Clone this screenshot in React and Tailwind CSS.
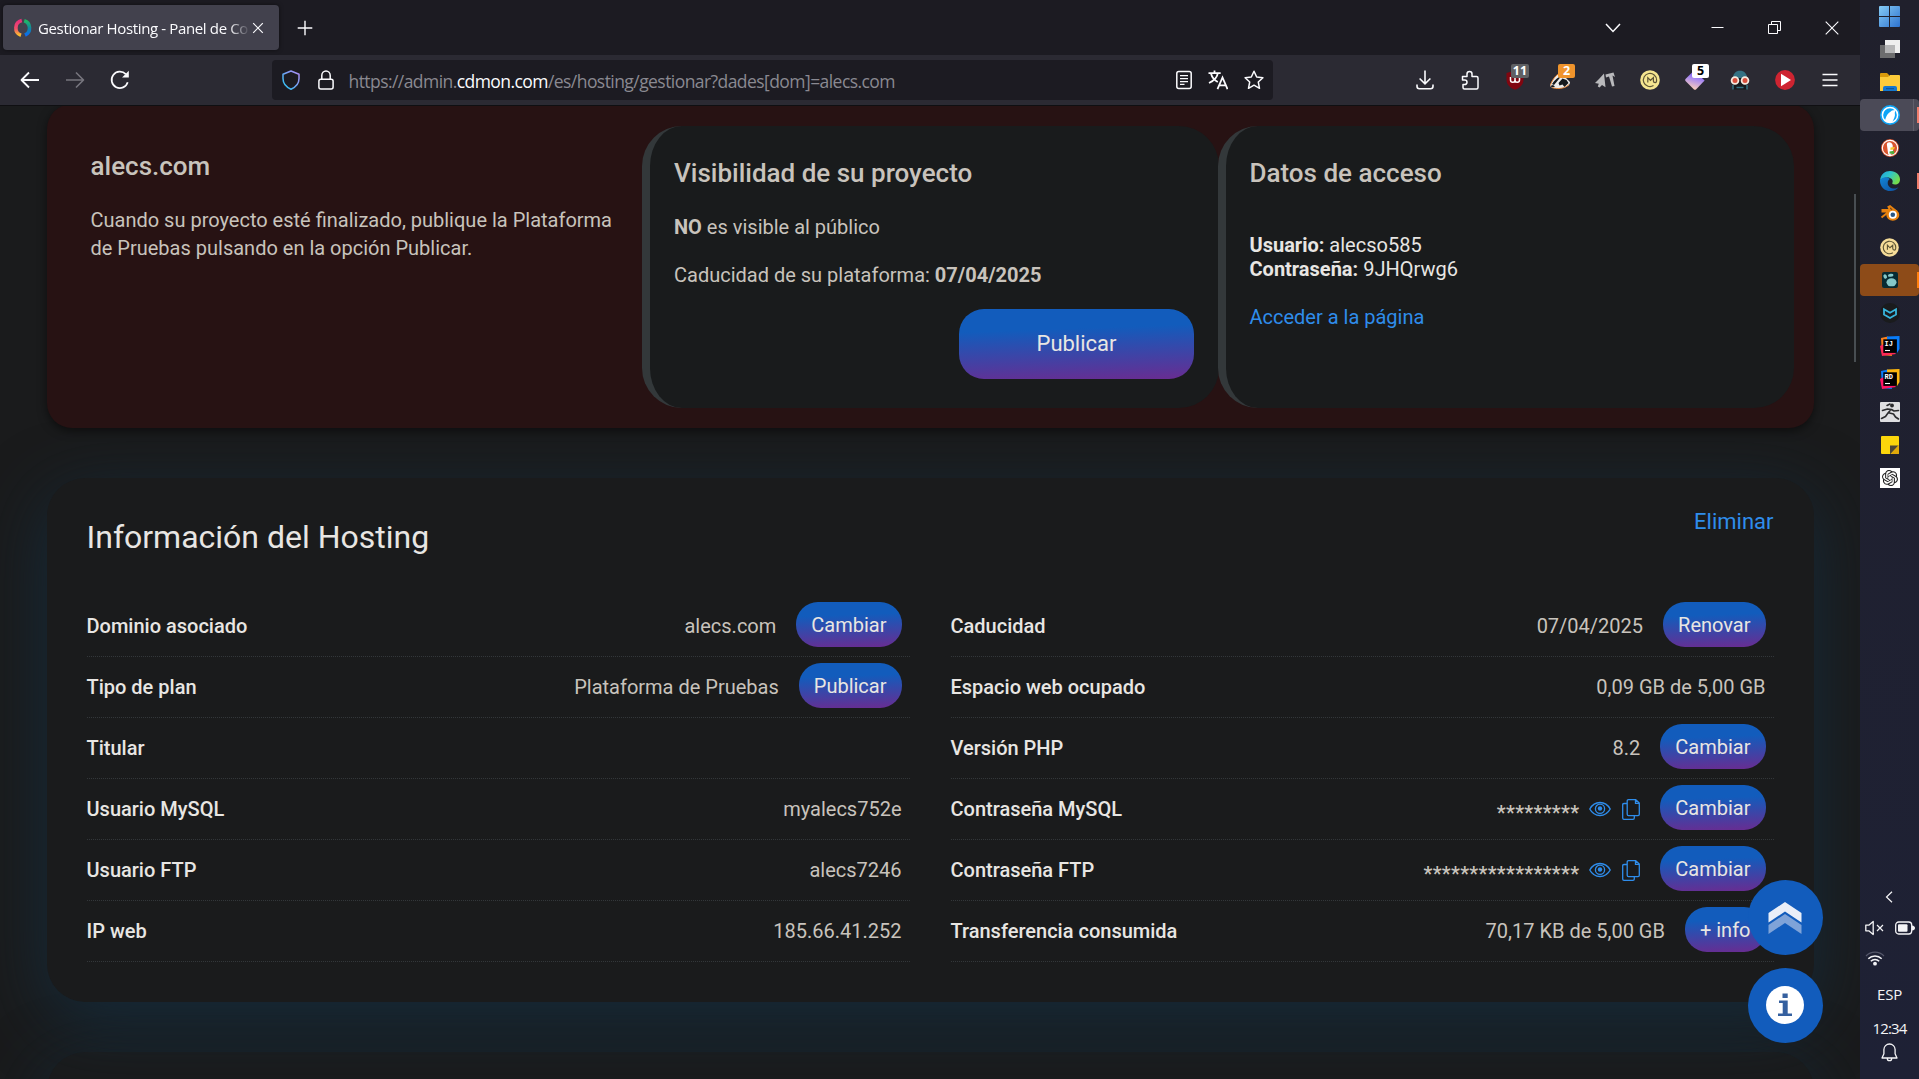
import React from "react";
import { SiOpenai } from "react-icons/si";

const Svg = ({ s = 20, w, h, vb = "0 0 20 20", children, className = "" }) => (
  <svg width={w || s} height={h || s} viewBox={vb} fill="none" className={`shrink-0 block ${className}`}>
    {children}
  </svg>
);

/* ---------- browser chrome ---------- */

function TabBar() {
  return (
    <div className="flex h-[55px] items-center bg-[#1c1b22] pl-[3px] text-[#fbfbfe]">
      <div className="flex h-[45px] w-[276px] items-center rounded-[4px] bg-[#42414d] pl-[10px] shadow-[0_0_4px_rgba(0,0,0,.5)]">
        <Svg s={20}>
          <defs>
            <linearGradient id="fa" x1="0" y1="0" x2="0" y2="1">
              <stop offset="0" stopColor="#e8307a" />
              <stop offset=".55" stopColor="#f0506a" />
              <stop offset="1" stopColor="#fbc02d" />
            </linearGradient>
            <linearGradient id="fb" x1="0" y1="0" x2="0" y2="1">
              <stop offset="0" stopColor="#1fb866" />
              <stop offset=".5" stopColor="#128a9a" />
              <stop offset="1" stopColor="#0b6cf0" />
            </linearGradient>
          </defs>
          <path d="M8.8 2.6A7.6 7.6 0 0 0 8 17.2" stroke="url(#fa)" strokeWidth="3.600" />
          <path d="M11.2 2.8A7.6 7.6 0 0 1 12 17" stroke="url(#fb)" strokeWidth="3.600" />
        </Svg>
        <div className="ml-[5px] w-[212px] whitespace-nowrap pt-[1px] text-[15px] tracking-[-0.360px] [mask-image:linear-gradient(to_right,#000_90%,transparent)]">
          Gestionar Hosting - Panel de Co
        </div>
        <Svg s={12} vb="0 0 12 12" className="ml-[2px]">
          <path d="M1.200 1.200l9.600 9.600M10.800 1.200l-9.600 9.600" stroke="#fbfbfe" strokeWidth="1.200" />
        </Svg>
      </div>
      <Svg s={16} vb="0 0 16 16" className="ml-[18px]">
        <path d="M8 .7v14.600M.7 8h14.600" stroke="#fbfbfe" strokeWidth="1.400" />
      </Svg>
      <div className="flex flex-1 items-center justify-end pr-[21px]">
        <Svg w={16} h={10} vb="0 0 16 10" className="mr-[90px]">
          <path d="M1 1l7 7.400L15 1" stroke="#fbfbfe" strokeWidth="1.500" />
        </Svg>
        <Svg w={13} h={12} vb="0 0 13 12" className="mr-[44px]">
          <path d="M.5 5.500h12" stroke="#fbfbfe" />
        </Svg>
        <Svg s={13} vb="0 0 13 13" className="mr-[44px]">
          <path d="M.5 3.500h9v9h-9zM3.500 3.500v-3h9v9h-3" stroke="#fbfbfe" />
        </Svg>
        <Svg s={14} vb="0 0 14 14">
          <path d="M.7.7l12.600 12.600M13.300.7L.7 13.300" stroke="#fbfbfe" strokeWidth="1.100" />
        </Svg>
      </div>
    </div>
  );
}

const Badge = ({ className, children }) => (
  <span className={`absolute flex h-[14px] items-center justify-center rounded-[2px] text-[12.500px] font-bold leading-none ${className}`}>
    {children}
  </span>
);

const Tool = ({ children }) => (
  <div className="relative flex h-[40px] w-[45px] items-center justify-center">{children}</div>
);

const Coin = ({ s = 20, fill = "#f5e690" }) => (
  <Svg s={s}>
    <circle cx="10" cy="10" r="9.800" fill={fill} />
    <path d="M13.500 15.600A6.600 6.600 0 1 1 16.600 10c0 2-.4 2.700-1.300 2.700S13.400 12 13.400 10.800V7.600L10.500 10.300 7.800 7.600v4.800" stroke="#5d5536" strokeWidth="1.200" />
  </Svg>
);

function NavBar() {
  return (
    <div className="flex h-[51px] items-center border-b border-[#0f0f12] bg-[#2b2a33]">
      <div className="flex w-[272px] items-center pl-[20px]">
        <Svg>
          <path d="M19 10H2M9 2.500L1.500 10 9 17.500" stroke="#fbfbfe" strokeWidth="1.800" strokeLinejoin="round" />
        </Svg>
        <Svg className="ml-[25px]">
          <path d="M1 10h17M11 2.500L18.500 10 11 17.500" stroke="#77767e" strokeWidth="1.600" strokeLinejoin="round" />
        </Svg>
        <Svg className="ml-[25px]">
          <path d="M17.700 12.200A8.200 8.200 0 1 1 15.800 4.200" stroke="#fbfbfe" strokeWidth="1.700" />
          <path d="M18.800 .8v6.700h-6.700z" fill="#fbfbfe" />
        </Svg>
      </div>
      <div className="flex h-[40px] w-[1001px] items-center rounded-[4px] bg-[#1c1b22] pl-[9px] pr-[9px]">
        <Svg>
          <defs>
            <linearGradient id="sh" x1="1" y1="0" x2="0" y2="1">
              <stop offset="0" stopColor="#b58cf5" />
              <stop offset=".5" stopColor="#6fa4f5" />
              <stop offset="1" stopColor="#1fc8f0" />
            </linearGradient>
          </defs>
          <path d="M10 1L18 4.200V8.500C18 13.500 15 17 10 19.200 5 17 2 13.500 2 8.500V4.200Z" stroke="url(#sh)" strokeWidth="1.500" strokeLinejoin="round" />
        </Svg>
        <Svg className="ml-[15px]">
          <path d="M5.800 9.500V5.500a4.200 4.500 0 0 1 8.400 0v4" stroke="#fbfbfe" strokeWidth="1.500" />
          <rect x="2.900" y="9.300" width="14.200" height="9.800" rx="2" stroke="#fbfbfe" strokeWidth="1.500" />
        </Svg>
        <div className="ml-[12.500px] flex-1 whitespace-nowrap pt-[2px] text-[17.500px] leading-[24px] tracking-[-0.560px] text-[#8a8991]">
          https://admin.<span className="text-[#fbfbfe]">cdmon.com</span>/es/hosting/gestionar?dades[dom]=alecs.com
        </div>
        <Svg className="mr-[14px]">
          <rect x="2.800" y="1.500" width="14.400" height="17" rx="2" stroke="#fbfbfe" strokeWidth="1.500" />
          <path d="M6 5.700h8M6 8.700h8M6 11.700h8M6 14.300h4.500" stroke="#fbfbfe" strokeWidth="1.300" />
        </Svg>
        <Svg className="mr-[16px]">
          <path d="M.5 3.200h12.200M6.500 .5v2.700M9.800 3.200C9.300 7 5.500 11 1 13M3 3.500C4 7.500 7 10.500 9.800 12M9.500 19.200L14.500 7.500l5 11.700M11.300 15.300h6.500" stroke="#fbfbfe" strokeWidth="1.800" />
        </Svg>
        <Svg>
          <path d="M10 1.300l2.700 5.700 6.200.8-4.600 4.200 1.200 6.300L10 15.200l-5.500 3.100 1.200-6.300L1.100 7.800 7.300 7z" stroke="#fbfbfe" strokeWidth="1.500" strokeLinejoin="round" />
        </Svg>
      </div>
      <div className="ml-[129px] flex items-center">
        <Tool>
          <Svg>
            <path d="M10 .5v13M4.600 8.500L10 13.800l5.400-5.300M2 14.500v1.800q0 2.400 2.400 2.400h11.200q2.400 0 2.400-2.400v-1.800" stroke="#fbfbfe" strokeWidth="1.600" />
          </Svg>
        </Tool>
        <Tool>
          <Svg>
            <path d="M2.500 6.500h4.500V4a2.500 2.500 0 0 1 5 0v2.500h4.500q1.500 0 1.500 1.500v9.500q0 1.500-1.500 1.500h-12q-1.500 0-1.500-1.500V14.500h1.800a2 2 0 0 0 0-4.400H2.500z" stroke="#fbfbfe" strokeWidth="1.500" strokeLinejoin="round" />
          </Svg>
        </Tool>
        <Tool>
          <Svg>
            <path d="M10 .5L18.500 3v6.500c0 5-3.500 8.500-8.500 10.300-5-1.800-8.500-5.300-8.500-10.300V3z" fill="#800610" />
            <path d="M5.500 7v3a2.200 2.200 0 0 0 4.500 0V7v3a2.200 2.200 0 0 0 4.500 0V7" stroke="#fff" strokeWidth="1.500" />
          </Svg>
          <Badge className="left-[19px] top-[4px] w-[18px] bg-[#5f6063] text-white">11</Badge>
        </Tool>
        <Tool>
          <Svg>
            <path d="M0 16C1 12 6 4 11 3l9 9c0 4-5 6-10 6C5 18.500 1 18 0 16z" fill="#ececec" />
            <path d="M2 14C4.500 10 8 7 11 6.500L6.500 12 4 15zM8.500 13l4-4.500 4 1.500 2 3-4 4-2-2.500-3 1zM0 16l3-1 2 1.500-2.500 1z" fill="#15181c" />
            <path d="M.5 15.500C1 12 6 3.500 11 3M2 17.500c4 1.500 12 2 17-3" stroke="#e98a3d" />
          </Svg>
          <Badge className="left-[21px] top-[4px] w-[17px] bg-[#f0942c] text-white">2</Badge>
        </Tool>
        <Tool>
          <Svg>
            <path d="M0 13L4 9l5-5.500 1.500 13.800-3.500-2.300-2.500 2.500-1.700-1 1-2.800zM10.500 4.500l8-2L20 7l-2.500-1.500 2 10.500-2.500.5L14 6.500 11 7.500z" fill="#b9b9bc" />
          </Svg>
        </Tool>
        <Tool><Coin /></Tool>
        <Tool>
          <Svg>
            <defs>
              <linearGradient id="dm" x1=".7" y1="0" x2=".4" y2="1">
                <stop offset="0" stopColor="#5b3cf5" />
                <stop offset=".45" stopColor="#a98af0" />
                <stop offset="1" stopColor="#ffd2b8" />
              </linearGradient>
            </defs>
            <path d="M9 .5L19.600 10.500 11 19.500q-1 .6-2 0L.5 11q-.6-1 0-2z" fill="url(#dm)" />
          </Svg>
          <Badge className="left-[20px] top-[4px] w-[17px] bg-white text-black">5</Badge>
        </Tool>
        <Tool>
          <Svg>
            <path d="M3 8C3 3.500 6 .8 10 .8S17 3.500 17 8z" fill="#347183" />
            <path d="M3 8h14v11.500H3z" fill="#16191d" />
            <path d="M3 15v4.500M17 15v4.500M6.500 17.500h7" stroke="#347183" strokeWidth="1.500" />
            <circle cx="5" cy="10.500" r="3.400" fill="#d94f3d" stroke="#f5eadf" strokeWidth="1.800" />
            <circle cx="15" cy="10.500" r="3.400" fill="#d94f3d" stroke="#f5eadf" strokeWidth="1.800" />
          </Svg>
        </Tool>
        <Tool>
          <Svg>
            <circle cx="10" cy="10" r="9.900" fill="#ce2431" />
            <path d="M6 3.800v12.400L16 10z" fill="#fff" />
          </Svg>
        </Tool>
        <Tool>
          <Svg s={16} vb="0 0 16 16">
            <path d="M.5 2.500h15M.5 8h15M.5 13.500h15" stroke="#fbfbfe" strokeWidth="1.500" />
          </Svg>
        </Tool>
      </div>
    </div>
  );
}

/* ---------- page ---------- */

const gradient = "bg-[linear-gradient(178deg,#125cbc_30%,#692c91_100%)]";

function Pill({ children }) {
  return (
    <button className={`ml-5 flex h-[45px] shrink-0 items-center rounded-[22px] px-[15px] text-[20px] text-[#e8e6e3] ${gradient}`}>
      {children}
    </button>
  );
}

const Eye = () => (
  <Svg w={22} h={16} vb="0 0 22 16" className="ml-[10px] mt-[3px]">
    <path d="M.8 8C3 4 7 1.500 11 1.500S19 4 21.200 8C19 12 15 14.500 11 14.500S3 12 .8 8z" stroke="#2f8deb" strokeWidth="1.400" />
    <circle cx="11" cy="7.700" r="4.600" stroke="#2f8deb" strokeWidth="1.300" />
    <circle cx="11" cy="7.500" r="2.200" fill="#2f8deb" />
  </Svg>
);

const Copy = () => (
  <Svg w={18} h={21} vb="0 0 18 21" className="ml-[11px] mt-[3px]">
    <path d="M5 4.500H2q-1.300 0-1.300 1.300V19q0 1.300 1.300 1.300h9q1.300 0 1.300-1.300v-2" stroke="#2f8deb" strokeWidth="1.300" />
    <path d="M6.500 .7h7.200L17.300 4v11.300q0 1.300-1.300 1.300H6.500q-1.300 0-1.300-1.300V2Q5.200.7 6.500.7zM13.500 1v3.300h3.500" stroke="#2f8deb" strokeWidth="1.300" />
  </Svg>
);

function Row({ label, value, action, secret }) {
  return (
    <div className="flex h-[61px] items-center border-b border-dotted border-[#33373a] pb-[3px] pr-[8px] text-[20px]">
      <span className="pt-[2px] font-medium text-[#e8e6e3]">{label}</span>
      <span className={secret ? "ml-auto pt-[11px] font-medium tracking-[0.300px] text-[#c8c3bc]" : "ml-auto pt-[2px] text-[#c8c3bc]"}>{value}</span>
      {secret && <Eye />}
      {secret && <Copy />}
      {action && <Pill>{action}</Pill>}
    </div>
  );
}

const left = [
  { label: "Dominio asociado", value: "alecs.com", action: "Cambiar" },
  { label: "Tipo de plan", value: "Plataforma de Pruebas", action: "Publicar" },
  { label: "Titular", value: "" },
  { label: "Usuario MySQL", value: "myalecs752e" },
  { label: "Usuario FTP", value: "alecs7246" },
  { label: "IP web", value: "185.66.41.252" },
];
const right = [
  { label: "Caducidad", value: "07/04/2025", action: "Renovar" },
  { label: "Espacio web ocupado", value: "0,09 GB de 5,00 GB" },
  { label: "Versión PHP", value: "8.2", action: "Cambiar" },
  { label: "Contraseña MySQL", value: "*********", action: "Cambiar", secret: true },
  { label: "Contraseña FTP", value: "*****************", action: "Cambiar", secret: true },
  { label: "Transferencia consumida", value: "70,17 KB de 5,00 GB", action: "+ info" },
];

function Page() {
  return (
    <div className="relative h-[973px] overflow-hidden bg-[#1a1b1c] px-[47px] font-[Roboto,sans-serif]">
      <section className="relative z-10 -mt-[2px] flex h-[324px] w-[1767px] rounded-[25px] bg-[#271213] pt-[22px] shadow-[0_3px_10px_rgba(0,0,0,.5)]">
        <div className="w-[595px] shrink-0 pl-[43.500px] pt-[22px] text-[#c8c3bc]">
          <h2 className="text-[26px] font-medium leading-[36px]">alecs.com</h2>
          <p className="mt-[22px] w-[530px] text-[20px] leading-[28px]">
            Cuando su proyecto esté finalizado, publique la Plataforma de Pruebas pulsando en la opción Publicar.
          </p>
        </div>
        <div className="h-[282px] w-[577px] shrink-0 rounded-[40px] border-l-[8px] border-[#33383a] bg-[#191b1c] pl-[24px] pr-[25px] text-[#c8c3bc]">
          <h2 className="mt-[29px] text-[26px] font-medium leading-[36px]">Visibilidad de su proyecto</h2>
          <p className="mt-[24px] text-[20px] leading-[24px]"><b>NO</b> es visible al público</p>
          <p className="mt-[24px] text-[20px] leading-[24px]">Caducidad de su plataforma: <b>07/04/2025</b></p>
          <div className="mt-[22px] flex justify-end">
            <button className={`h-[70px] w-[235px] rounded-[25px] pb-[2px] text-[22px] text-[#e8e6e3] ${gradient}`}>Publicar</button>
          </div>
        </div>
        <div className="-ml-[1px] h-[282px] w-[576px] shrink-0 rounded-[40px] border-l-[8px] border-[#33383a] bg-[#191b1c] pl-[23.500px] text-[20px] leading-[24px] text-[#e8e6e3]">
          <h2 className="mt-[29px] text-[26px] font-medium leading-[36px] text-[#c8c3bc]">Datos de acceso</h2>
          <p className="mt-[42px]"><b>Usuario:</b> alecso585</p>
          <p><b>Contraseña:</b> 9JHQrwg6</p>
          <p className="mt-[24px] text-[#2f8deb]">Acceder a la página</p>
        </div>
      </section>

      <section className="relative z-[1] mt-[50px] h-[524px] w-[1767px] rounded-[38px] bg-[#1a1b1c] pl-[39.500px] pr-[40.500px] pt-[36px] shadow-[0_18px_68px_rgba(20,48,66,.78)]">
        <div className="flex h-[82px] justify-between">
          <h1 className="pt-[2px] text-[32px] leading-[42px] text-[#e8e6e3]">Información del Hosting</h1>
          <span className="-mt-[6px] text-[22px] leading-[28px] text-[#2f8deb]">Eliminar</span>
        </div>
        <div className="grid grid-cols-[823px_823px] justify-between">
          <div>{left.map((r) => <Row key={r.label} {...r} />)}</div>
          <div>{right.map((r) => <Row key={r.label} {...r} />)}</div>
        </div>
      </section>

      <section className="mt-[50px] h-[400px] w-[1767px] rounded-[38px] bg-[#1a1b1c] shadow-[0_18px_68px_rgba(20,48,66,.78)]" />

      <div className="absolute left-[1854px] top-[88px] h-[168px] w-[2px] bg-[#484e51]" />
      <div className="absolute left-[1748px] top-[774px] z-20 flex flex-col gap-[13px]">
        <button className="flex h-[75px] w-[75px] items-center justify-center rounded-full bg-[#125cbc]">
          <Svg w={34} h={34} vb="0 0 34 34" className="-ml-[2px]">
            <path d="M.5 12L17 1l16.500 11v9.500L17 10.500.5 21.500z" fill="#e9eef8" />
            <path d="M.5 24L17 13 33.500 24v9L17 22 .5 33z" fill="#7fa3d8" />
          </Svg>
        </button>
        <button className="flex h-[75px] w-[75px] items-center justify-center rounded-full bg-[#125cbc]">
          <Svg s={38} vb="0 0 38 38" className="-ml-[2px] -mt-[1px]">
            <circle cx="19" cy="19" r="19" fill="#fff" />
            <path d="M16.500 7.500h5.200v4.500h-5.200zM13 14.500h8.700V27.500H26V30H12v-2.500h4.700V17H13z" fill="#35609f" />
          </Svg>
        </button>
      </div>
    </div>
  );
}

/* ---------- taskbar ---------- */

const Jet = ({ label, a, b, c }) => (
  <Svg>
    <path d="M1 2l7-1.500L12 20l-10-1z" fill={a} />
    <path d="M7 .5L19.500 0v13L17 17H8z" fill={b} />
    <path d="M0 10l6-3 10 11-14 2z" fill={c} />
    <rect x="3.300" y="3.300" width="13.600" height="13.600" fill="#000" />
    <text x="4.500" y="9.800" fontSize="7" fontWeight="700" fill="#fff" fontFamily="Liberation Mono, monospace">{label}</text>
    <path d="M5 14.500h5" stroke="#fff" strokeWidth="1.100" />
  </Svg>
);

const apps = [
  { icon: (
    <Svg s={21} vb="0 0 21 21">
      <defs><linearGradient id="wn" x1="0" y1="0" x2="1" y2="1"><stop stopColor="#86ccf5" /><stop offset="1" stopColor="#2d72cf" /></linearGradient></defs>
      <path d="M0 1q0-1 1-1h9v10H0zM11 0h9q1 0 1 1v9H11zM0 11h10v10H1q-1 0-1-1zM11 11h10v9q0 1-1 1h-9z" fill="url(#wn)" />
    </Svg>
  ) },
  { icon: (
    <Svg>
      <path d="M5 1h15v13H5z" fill="#eeeeef" />
      <path d="M0 6h15v13H0z" fill="#6c6c6e" />
      <path d="M5 6h10v8H5z" fill="#b5b5b7" />
    </Svg>
  ) },
  { icon: (
    <Svg>
      <path d="M0 2q0-1 1-1h6l2 2v4H0z" fill="#d99a0b" />
      <path d="M0 5h8l2-2h9q1 0 1 1v15H0z" fill="#fccb3a" />
      <path d="M3 19v-3q0-2 2-2h10q2 0 2 2v3z" fill="#1478cf" />
      <path d="M6 16.700h8" stroke="#0b4f93" />
    </Svg>
  ) },
  { bg: "bg-[#4b4a57]", ind: "bg-[#ef7d6c]", split: true, icon: (
    <Svg>
      <circle cx="10" cy="10" r="10" fill="#0ea5f7" />
      <circle cx="10" cy="10" r="7.600" stroke="#fff" strokeWidth="1.500" />
      <path d="M4.800 16c1-3.500 1.500-5.500 4-8l3.200-2.500 3.300-.5-.5 3c.8 3-1 6-2.500 9q-4 1-7.500-1z" fill="#fff" />
    </Svg>
  ) },
  { icon: (
    <Svg s={18}>
      <circle cx="10" cy="10" r="10" fill="#d9552f" />
      <circle cx="10" cy="10" r="8.500" stroke="#fff" strokeWidth="1.200" />
      <path d="M6.500 6c0-3 5.500-3.500 6.500 1v3l.5 5-3.500 3-2-1z" fill="#fff" />
      <path d="M10.500 9.500l5-.5-1 2.500-4 .8z" fill="#f7c62f" />
      <path d="M9.500 14l5-1v4l-5-1z" fill="#4faa3b" />
    </Svg>
  ) },
  { ind: "bg-[#ef7d6c]", icon: (
    <Svg>
      <defs>
        <linearGradient id="e1" x1="0" y1="0" x2="1" y2=".5"><stop stopColor="#1f9fdc" /><stop offset=".5" stopColor="#2fc5c9" /><stop offset="1" stopColor="#74dc4c" /></linearGradient>
        <linearGradient id="e2" x1="0" y1="0" x2="1" y2="1"><stop stopColor="#1285d8" /><stop offset="1" stopColor="#0f4f9e" /></linearGradient>
      </defs>
      <path d="M0 9C1 3 5 0 10 0c6 0 10 4 10 8.500 0 3-2 5-5 5-2 0-3.500-.8-2.500-2C13.500 9 11 6.500 7.500 6.500 4 6.500 1 8 0 9z" fill="url(#e1)" />
      <path d="M0 9c2-3 7-4 10-1-3 1-4 8 3 9.500 2 .3 4-.3 5.500-1.500C17 18.500 14 20 10.500 20 4 20-.3 15 0 9z" fill="url(#e2)" />
    </Svg>
  ) },
  { icon: (
    <Svg>
      <path d="M1.500 13.500L9 7.500H2.500V6H10L8.500 3l1.500-.8 7 5.500" stroke="#e8820e" strokeWidth="2" />
      <ellipse cx="12.800" cy="11" rx="6.500" ry="5.700" fill="#e8820e" />
      <circle cx="12.800" cy="10.800" r="4" fill="#fff" />
      <circle cx="12.800" cy="10.800" r="2.300" fill="#265787" />
    </Svg>
  ) },
  { icon: <Coin s={19} fill="#f5dc98" /> },
  { bg: "bg-[#8d4b18]", ind: "bg-[#ff7f0e]", icon: (
    <Svg s={16} vb="0 0 16 16">
      <rect width="16" height="16" rx="2" fill="#062b33" />
      <ellipse cx="9.500" cy="10.300" rx="5" ry="4" fill="#86c8c8" />
      <ellipse cx="3.200" cy="4.500" rx="1.700" ry="2.300" transform="rotate(-25 3.200 4.500)" fill="#86c8c8" />
      <ellipse cx="8.700" cy="3.300" rx="2.800" ry="1.500" transform="rotate(-8 8.700 3.300)" fill="#86c8c8" />
    </Svg>
  ) },
  { icon: (
    <Svg>
      <circle cx="10" cy="10" r="10" fill="#1a1b1d" />
      <path d="M4 6.200l6 3.500 6-3.500v5.300L10 15l-6-3.500zM4 6.500v5" stroke="#38b6dc" strokeWidth="1.800" />
    </Svg>
  ) },
  { icon: <Jet label="IJ" a="#fc801d" b="#087cfa" c="#fe2857" /> },
  { icon: <Jet label="RD" a="#087cfa" b="#fdb60d" c="#ff1464" /> },
  { icon: (
    <Svg>
      <rect width="20" height="20" rx="1" fill="#dfdfe1" />
      <circle cx="12" cy="3.500" r="1.900" fill="#2b2b2d" />
      <path d="M2.500 8.500l5-1.500 4 .5 2.500 1.500 4.500-.5M11 7.500l-3 3.500-2.500 3.500-4 2M8.500 10.800l5 1.200 2 3 3 2M7 3.500l3-1.500" stroke="#2b2b2d" strokeWidth="1.600" strokeLinecap="round" strokeLinejoin="round" />
    </Svg>
  ) },
  { icon: (
    <Svg s={18} vb="0 0 18 18">
      <rect width="18" height="18" rx="1" fill="#fbd60b" />
      <path d="M9 9.500h9V9L9.500 18H9z" fill="#4c4636" />
      <path d="M18 9v8q0 1-1 1H9.500z" fill="#e0a90a" />
    </Svg>
  ) },
  { icon: (
    <span className="flex h-5 w-5 items-center justify-center bg-white">
      <SiOpenai size={16} color="#222" />
    </span>
  ) },
];

function Taskbar() {
  return (
    <aside className="flex h-[1079px] w-[59px] flex-col overflow-hidden bg-gradient-to-b from-[#20202c] to-[#1e2135] text-[#f4f4f6]">
      <div>
        {apps.map((a, i) => (
          <div key={i} className="h-[33px] pb-[1px]">
            <div className={`relative flex h-[32px] items-center justify-center rounded-[4px] ${a.bg || ""}`}>
              {a.icon}
              {a.split && <span className="absolute right-[5px] top-0 h-full w-px bg-[#5f5e6a]" />}
              {a.ind && <span className={`absolute right-0 top-[8px] h-[16px] w-[2px] ${a.ind}`} />}
            </div>
          </div>
        ))}
      </div>
      <div className="mt-auto flex flex-col items-center pb-[17px]">
        <Svg w={8} h={12} vb="0 0 8 12" className="-ml-[1px]"><path d="M7 .7L1.500 6 7 11.300" stroke="#f4f4f6" strokeWidth="1.200" /></Svg>
        <div className="mt-[17px] flex w-full items-center pl-[5px]">
          <Svg w={19} h={16} vb="0 0 19 16">
            <path d="M.8 5.200h3L8.200 1.500v13L3.800 10.800h-3z" stroke="#f4f4f6" strokeWidth="1.300" strokeLinejoin="round" />
            <path d="M12 5l6 6M18 5l-6 6" stroke="#f4f4f6" strokeWidth="1.200" />
          </Svg>
          <Svg w={20} h={14} vb="0 0 20 14" className="ml-[11px]">
            <rect x=".7" y="1" width="16" height="12" rx="3" stroke="#f4f4f6" strokeWidth="1.300" />
            <rect x="3" y="3.300" width="9.500" height="7.500" rx="1" fill="#f4f4f6" />
            <path d="M17 4.500q3 .5 3 2.500t-3 2.500z" fill="#f4f4f6" />
          </Svg>
        </div>
        <div className="mt-[15px] w-full pl-[5px]">
          <Svg w={20} h={15} vb="0 0 20 15">
            <path d="M1 5a12.500 12.500 0 0 1 18 0" stroke="#55576a" strokeWidth="1.200" />
            <path d="M3.300 7.800a9.300 9.300 0 0 1 13.400 0M5.800 10.300a6 6 0 0 1 8.400 0" stroke="#f4f4f6" strokeWidth="1.500" />
            <circle cx="10" cy="12.700" r="1.900" fill="#f4f4f6" />
          </Svg>
        </div>
        <div className="mt-[18px] text-[15px] leading-[20px] tracking-[-0.200px]">ESP</div>
        <div className="mt-[14px] text-[15px] leading-[20px] tracking-[-0.800px]">12:34</div>
        <Svg w={17} h={19} vb="0 0 17 19" className="mt-[5px]">
          <path d="M8.500 1a5.600 5.600 0 0 0-5.600 5.600v4.200L1 15h15l-1.900-4.200V6.600A5.600 5.600 0 0 0 8.500 1zM6.300 15.500a2.200 2.200 0 0 0 4.400 0" stroke="#f4f4f6" strokeWidth="1.300" strokeLinejoin="round" />
        </Svg>
      </div>
    </aside>
  );
}

export default function App() {
  return (
    <div className="flex h-[1079px] w-[1919px] overflow-hidden bg-[#1a1b1c] font-['Open_Sans','Noto_Sans',sans-serif]">
      <div className="w-[1860px] shrink-0">
        <TabBar />
        <NavBar />
        <Page />
      </div>
      <Taskbar />
    </div>
  );
}
